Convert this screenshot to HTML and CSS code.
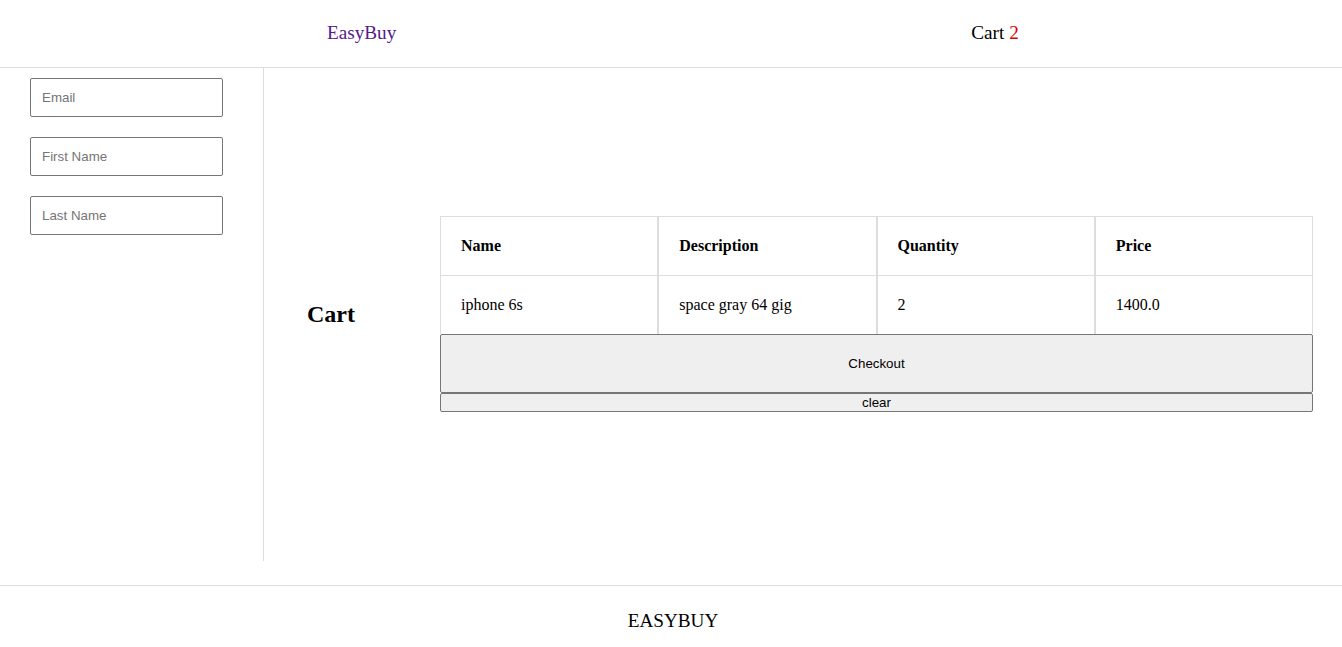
FILE: index.html
```html
<!DOCTYPE html>
<html>
<head>
<meta charset="utf-8">
<title>EasyBuy</title>
<link rel="stylesheet" href="styles.css">
</head>
<body>
<header class="topbar">
  <a class="brand" href="#">EasyBuy</a>
  <a class="cart-link" href="#">Cart <span class="count">2</span></a>
</header>
<div class="layout">
  <aside class="sidebar">
    <input class="field" type="text" placeholder="Email">
    <input class="field" type="text" placeholder="First Name">
    <input class="field" type="text" placeholder="Last Name">
  </aside>
  <main class="main">
    <h2 class="title">Cart</h2>
    <div class="cart">
      <table class="cart-table">
        <thead>
          <tr><th>Name</th><th>Description</th><th>Quantity</th><th>Price</th></tr>
        </thead>
        <tbody>
          <tr><td>iphone 6s</td><td>space gray 64 gig</td><td>2</td><td>1400.0</td></tr>
        </tbody>
      </table>
      <button class="btn btn-checkout">Checkout</button>
      <button class="btn btn-clear">clear</button>
    </div>
  </main>
</div>
<footer class="footer">EASYBUY</footer>
</body>
</html>
```
FILE: styles.css
```css
html, body {
  margin: 0;
  padding: 0;
  background: #fff;
  font-family: "Liberation Serif", "Times New Roman", serif;
  color: #000;
}
.topbar {
  height: 66px;
  padding-bottom: 1px;
  border-bottom: 1px solid #ddd;
  display: flex;
  align-items: center;
  padding-left: 327px;
  gap: 575px;
  font-size: 19.2px;
}
.topbar a {
  text-decoration: none;
}
.brand {
  color: #551a8b;
}
.cart-link {
  color: #000;
}
.count {
  color: #e00000;
}
.layout {
  display: flex;
  height: 493px;
}
.sidebar {
  width: 264px;
  border-right: 1px solid #ddd;
  padding: 10px 0 0 30px;
  box-sizing: border-box;
  display: flex;
  flex-direction: column;
  gap: 20px;
}
.field {
  width: 193px;
  height: 39px;
  box-sizing: border-box;
  border: 1px solid #767676;
  border-radius: 2px;
  padding: 0 11px;
  font-family: "Liberation Sans", Arial, sans-serif;
  font-size: 13.33px;
  color: #000;
  margin: 0;
}
.field::placeholder {
  color: #757575;
}
.main {
  flex: 1;
  display: flex;
  align-items: center;
  padding: 0 29px 1px 43px;
}
.title {
  width: 133px;
  flex: none;
  margin: 0;
  font-size: 24px;
  font-weight: bold;
}
.cart {
  flex: 1;
  display: flex;
  flex-direction: column;
}
.cart-table {
  width: 100%;
  border-collapse: separate;
  border-spacing: 0;
  table-layout: fixed;
  font-size: 16px;
}
.cart-table th,
.cart-table td {
  text-align: left;
  padding: 20px;
  line-height: 18px;
  border-left: 1px solid #ddd;
  border-right: 1px solid #ddd;
}
.cart-table th {
  border-top: 1px solid #ddd;
  border-bottom: 1px solid #ddd;
}
.btn {
  width: 100%;
  margin: 0;
  background: #efefef;
  border: 1px solid #767676;
  border-radius: 2px;
  font-family: "Liberation Sans", Arial, sans-serif;
  font-size: 13.33px;
  color: #000;
  box-sizing: border-box;
}
.btn-checkout {
  height: 59px;
}
.btn-clear {
  height: 19px;
  padding: 0 6px;
  line-height: 15px;
}
.footer {
  margin-top: 24px;
  border-top: 1px solid #ddd;
  height: 69px;
  display: flex;
  align-items: center;
  justify-content: center;
  padding-left: 4px;
  font-size: 19.2px;
}
```
